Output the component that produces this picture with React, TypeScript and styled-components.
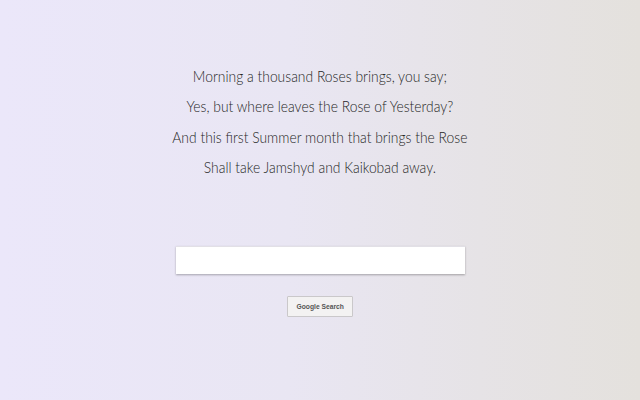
import React from "react";
import styled, { createGlobalStyle } from "styled-components";

const GlobalStyle = createGlobalStyle`
  html, body {
    margin: 0;
    padding: 0;
    height: 100%;
  }
  #root {
    height: 100%;
  }
`;

const lines = [
  "Morning a thousand Roses brings, you say;",
  "Yes, but where leaves the Rose of Yesterday?",
  "And this first Summer month that brings the Rose",
  "Shall take Jamshyd and Kaikobad away.",
];

const Page = styled.main`
  height: 100vh;
  box-sizing: border-box;
  display: flex;
  flex-direction: column;
  align-items: center;
  padding-top: 61px;
  background: linear-gradient(90deg, #ebe7fa 0%, #e9e6f3 45%, #e6e3e6 75%, #e4e1dd 100%);
  overflow: hidden;
`;

const Poem = styled.div`
  font-family: Lato, "Noto Sans", sans-serif;
  font-weight: 300;
  font-size: 15.5px;
  line-height: 30.3px;
  color: #262626;
  text-align: center;
  transform: scaleX(0.895);
`;

const Line = styled.p`
  margin: 0;
`;

const SearchForm = styled.form`
  margin-top: 64px;
  display: flex;
  flex-direction: column;
  align-items: center;
  gap: 22px;
`;

const SearchInput = styled.input`
  width: 289px;
  height: 28px;
  box-sizing: border-box;
  border: none;
  border-top: 1px solid #e2e0e6;
  background: #fff;
  box-shadow: 0 1px 2px rgba(0, 0, 0, 0.3);
  outline: none;
  margin-left: 1px;
`;

const SearchButton = styled.button`
  width: 66px;
  height: 21px;
  box-sizing: border-box;
  padding: 0;
  border: 1px solid #cac8ca;
  border-radius: 1px;
  background: #f3f2f2;
  font-family: "Liberation Sans", Arial, sans-serif;
  font-weight: 700;
  font-size: 8px;
  color: #555;
  cursor: pointer;
  display: flex;
  align-items: center;
  justify-content: center;
`;

const ButtonLabel = styled.span`
  display: inline-block;
  white-space: nowrap;
  transform: scaleX(0.84);
`;

export default function App() {
  return (
    <>
      <GlobalStyle />
      <Page>
        <Poem>
          {lines.map((line) => (
            <Line key={line}>{line}</Line>
          ))}
        </Poem>
        <SearchForm onSubmit={(e) => e.preventDefault()}>
          <SearchInput type="text" />
          <SearchButton type="submit">
            <ButtonLabel>Google Search</ButtonLabel>
          </SearchButton>
        </SearchForm>
      </Page>
    </>
  );
}
